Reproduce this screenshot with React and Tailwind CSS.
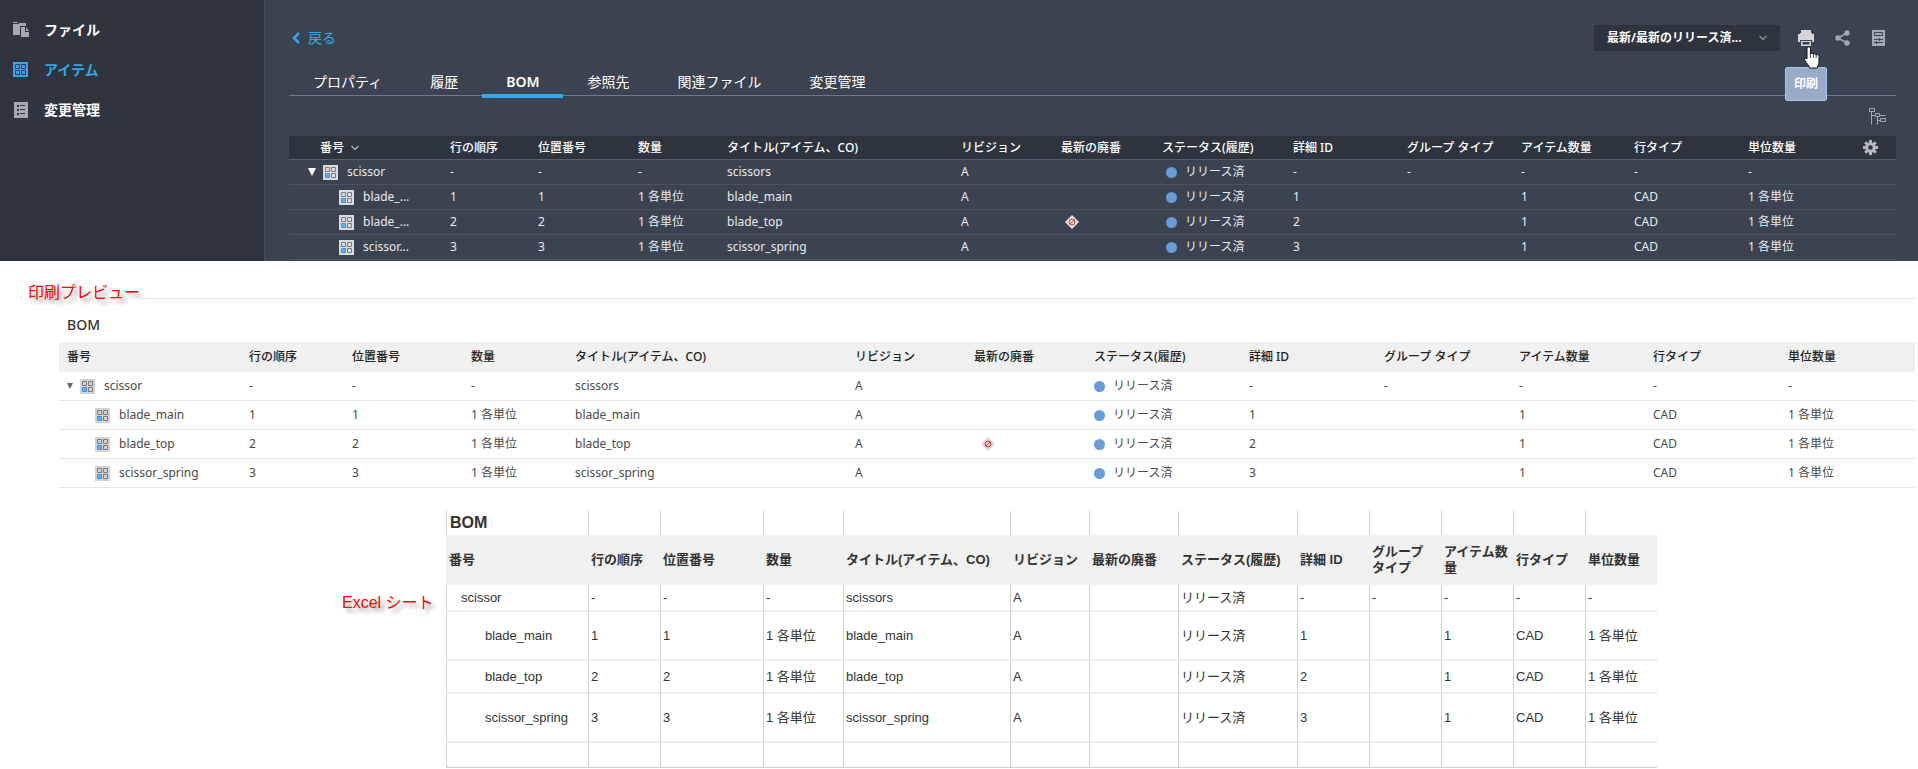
import { useState } from "react";

const NAV = [
  { id: "files", label: "ファイル" },
  { id: "items", label: "アイテム" },
  { id: "changes", label: "変更管理" },
];

const TABS = ["プロパティ", "履歴", "BOM", "参照先", "関連ファイル", "変更管理"];

const COLUMNS = [
  { key: "number", label: "番号", web: "w-[153px]", print: "w-[182px]", excel: "w-[142px]" },
  { key: "order", label: "行の順序", web: "w-[88px]", print: "w-[103px]", excel: "w-[72px]" },
  { key: "position", label: "位置番号", web: "w-[100px]", print: "w-[119px]", excel: "w-[103px]" },
  { key: "qty", label: "数量", web: "w-[89px]", print: "w-[104px]", excel: "w-[80px]" },
  { key: "title", label: "タイトル(アイテム、CO)", web: "w-[234px]", print: "w-[280px]", excel: "w-[167px]" },
  { key: "revision", label: "リビジョン", web: "w-[100px]", print: "w-[119px]", excel: "w-[79px]" },
  { key: "obsolete", label: "最新の廃番", web: "w-[101px]", print: "w-[120px]", excel: "w-[89px]" },
  { key: "status", label: "ステータス(履歴)", web: "w-[131px]", print: "w-[155px]", excel: "w-[119px]" },
  { key: "detail", label: "詳細 ID", web: "w-[114px]", print: "w-[135px]", excel: "w-[72px]" },
  { key: "group", label: "グループ タイプ", web: "w-[114px]", print: "w-[135px]", excel: "w-[72px]" },
  { key: "items", label: "アイテム数量", web: "w-[113px]", print: "w-[134px]", excel: "w-[72px]" },
  { key: "rowType", label: "行タイプ", web: "w-[114px]", print: "w-[135px]", excel: "w-[72px]" },
  { key: "unitQty", label: "単位数量", web: "w-[104px]", print: "w-[135px]", excel: "w-[72px]" },
];

const child = (n, name, extra = {}) => ({
  number: name, order: n, position: n, qty: "1 各単位", title: name, revision: "A",
  status: "リリース済", detail: n, group: "", items: "1", rowType: "CAD", unitQty: "1 各単位",
  ...extra,
});

const ROWS = [
  {
    root: true, number: "scissor", order: "-", position: "-", qty: "-", title: "scissors", revision: "A",
    status: "リリース済", detail: "-", group: "-", items: "-", rowType: "-", unitQty: "-", excelH: "h-[27px]",
  },
  child("1", "blade_main", { short: "blade_...", excelH: "h-[49px]" }),
  child("2", "blade_top", { short: "blade_...", obsolete: true, excelH: "h-[33px]" }),
  child("3", "scissor_spring", { short: "scissor...", excelH: "h-[49px]" }),
];

const NavIcon = ({ id }) => {
  if (id === "files")
    return (
      <svg width="17" height="16" viewBox="0 0 17 16" fill="#a4a8b2" aria-hidden="true">
        <path d="M0 0h5v1H0zM0 2h6V1h7v3H7v9H0z" />
        <path d="M8 5h4v5h4v5H8z" />
        <path d="M13 5l3 4h-3z" />
      </svg>
    );
  if (id === "items")
    return (
      <svg width="17" height="16" viewBox="0 0 17 16" aria-hidden="true">
        <path fill="#35a6ea" d="M0 0h15v15H0z" />
        <path fill="none" stroke="#2b3a4c" d="M2.5 2.5h4v4h-4zM8.5 2.5h4v4h-4zM2.5 8.5h4v4h-4zM8.5 8.5h4v4h-4z" />
      </svg>
    );
  return (
    <svg width="17" height="16" viewBox="0 0 17 16" aria-hidden="true">
      <path fill="#a4a8b2" d="M1 0h14v16H1z" />
      <path fill="#30343f" d="M4 3h2v2H4zM4 7h2v2H4zM4 11h2v2H4zM7 3h5v1H7zM7 7h5v1H7zM7 11h5v1H7z" />
    </svg>
  );
};

const ItemIcon = ({ bg }) => (
  <svg width="15" height="15" viewBox="0 0 15 15" className="shrink-0" aria-hidden="true">
    <path fill={bg} d="M0 0h15v15H0z" />
    <path fill="none" stroke="#777b82" d="M2.5 2.5h4v4h-4zM8.5 2.5h4v4h-4zM8.5 8.5h4v4h-4z" />
    <path fill="#5cb0f5" stroke="#4692d8" d="M2.5 8.5h4v4h-4z" />
  </svg>
);

const Triangle = ({ className }) => (
  <svg viewBox="0 0 8 8" className={className} fill="currentColor" aria-hidden="true">
    <path d="M0 0h8L4 8z" />
  </svg>
);

const ObsoleteIcon = ({ fill }) => (
  <svg width="14" height="14" viewBox="0 0 14 14" role="img" aria-label="廃番">
    <path fill={fill} d="M7 0l7 7-7 7-7-7z" />
    <circle cx="7" cy="7" r="3" fill="none" stroke="#c8382f" />
    <path d="M5 9l4-4" stroke="#c8382f" />
  </svg>
);

const ChevronDown = ({ className }) => (
  <svg width="8" height="6" viewBox="0 0 8 6" className={className} aria-hidden="true">
    <path d="M0.5 1l3.5 3.5L7.5 1" fill="none" stroke="currentColor" strokeWidth="1.5" />
  </svg>
);

const PrintIcon = () => (
  <svg width="16" height="16" viewBox="0 0 16 16" fill="#d3d5d9" aria-hidden="true">
    <path d="M3 0h10v3H3zM0 4h2V3h12v1h2v8h-2v-2H2v2H0z" />
    <path d="M3 11h10v5H3zM4.500 12v2.500h7V12z" fillRule="evenodd" />
  </svg>
);

const ShareIcon = () => (
  <svg width="15" height="16" viewBox="0 0 15 16" fill="#a4a8b2" aria-hidden="true">
    <path d="M12 3L3 8l9 5" fill="none" stroke="#a4a8b2" strokeWidth="1.5" />
    <circle cx="12" cy="3" r="2.700" />
    <circle cx="3" cy="8" r="2.700" />
    <circle cx="12" cy="13" r="2.700" />
  </svg>
);

const SheetIcon = () => (
  <svg width="13" height="16" viewBox="0 0 13 16" aria-hidden="true">
    <path fill="#a4a8b2" d="M0 0h13v16H0z" />
    <path fill="none" stroke="#3c4350" d="M2.500 2.500h8v3h-8zM2 9.500h9M2 12.500h9M7.500 8v3M4.500 11v3" />
  </svg>
);

const TreeIcon = () => (
  <svg width="17" height="17" viewBox="0 0 17 17" fill="none" stroke="#a4a8b2" aria-hidden="true">
    <path d="M0.500 0.500h5v3h-5zM2.500 3.500v13M2.500 7.500h4M6.500 5.500h4v3h-4zM10.500 7.500h6M8.500 8.500v8M8.500 12.500h3M11.500 10.500h5v3h-5z" />
  </svg>
);

const GearIcon = () => (
  <svg width="15" height="15" viewBox="0 0 15 15" aria-hidden="true">
    <circle cx="7.500" cy="7.500" r="3.800" fill="none" stroke="#b4b8c0" strokeWidth="3" />
    <path
      d="M7.500 0v3M7.500 12v3M0 7.500h3M12 7.500h3M2.200 2.200l2 2M10.800 10.800l2 2M12.800 2.200l-2 2M4.200 10.800l-2 2"
      stroke="#b4b8c0" strokeWidth="3"
    />
  </svg>
);

const HandCursor = () => (
  <svg width="18" height="24" viewBox="0 0 18 24" aria-hidden="true">
    <path
      d="M4 2.500a1.700 1.700 0 0 1 3.400 0V8c.3-1.200 2.700-1.200 3 .4.5-1 2.500-.8 2.800.6.8-.9 2.800-.5 2.800 1.200V16c0 2-1.500 3.500-1.500 6H6.500c-.3-2.500-3.300-5-5-8-.8-1.600 1-2.600 2.500-1z"
      fill="#fff" stroke="#111" strokeWidth="1"
    />
    <path d="M7.400 8v4M10.400 8.500v3.500M13.200 9v3" stroke="#111" strokeWidth="0.800" />
  </svg>
);

const Status = ({ label, className }) => (
  <span className={`flex items-center gap-2 ${className}`}>
    <span className="size-[11px] shrink-0 rounded-full bg-[#699bd5]" />
    {label}
  </span>
);

const ItemsTable = () => (
  <table className="w-full table-fixed border-separate border-spacing-0 text-left text-xs text-[#e8eaee]">
    <thead>
      <tr className="bg-[#2d343e]">
        {COLUMNS.map((c) => (
          <th key={c.key} className={`${c.web} h-6 border-b border-[#555e6b] p-0 pl-2 leading-5 font-medium whitespace-nowrap text-white`}>
            {c.key === "number" ? (
              <button type="button" className="ml-[23px] flex items-center gap-[7px]">
                {c.label}
                <ChevronDown className="text-[#a4a8b2]" />
              </button>
            ) : c.label}
          </th>
        ))}
        <th className="h-6 w-[52px] border-b border-[#555e6b] p-0">
          <button type="button" aria-label="列の設定" className="ml-[19px] block">
            <GearIcon />
          </button>
        </th>
      </tr>
    </thead>
    <tbody>
      {ROWS.map((row) => (
        <tr key={row.number}>
          {COLUMNS.map((c) => (
            <td key={c.key} className="h-[25px] border-b border-[#4b535f] p-0 pl-2 leading-5 whitespace-nowrap">
              {c.key === "number" ? (
                <span className={`flex items-center ${row.root ? "pl-[11px]" : "pl-[42px]"}`}>
                  {row.root && <Triangle className="mr-[7px] size-2 text-white" />}
                  <ItemIcon bg="#dcdcdc" />
                  <span className="ml-[9px]" title={row.number}>{row.short || row.number}</span>
                </span>
              ) : c.key === "obsolete" ? (
                row.obsolete && <span className="flex pl-1"><ObsoleteIcon fill="#e4e4e4" /></span>
              ) : c.key === "status" ? (
                <Status label={row.status} className="pl-1" />
              ) : row[c.key]}
            </td>
          ))}
          <td className="border-b border-[#4b535f] p-0" />
        </tr>
      ))}
    </tbody>
  </table>
);

const PrintTable = () => (
  <table className="w-full table-fixed border-separate border-spacing-0 text-left text-xs text-[#4a4a4a]">
    <caption className="h-[34px] pl-2 text-left text-sm leading-[34px] font-medium text-[#333]">BOM</caption>
    <thead>
      <tr className="bg-[#f0f0f0]">
        {COLUMNS.map((c) => (
          <th key={c.key} className={`${c.print} h-[30px] p-0 pl-2 leading-5 font-medium whitespace-nowrap text-[#222]`}>
            {c.label}
          </th>
        ))}
      </tr>
    </thead>
    <tbody>
      {ROWS.map((row) => (
        <tr key={row.number}>
          {COLUMNS.map((c) => (
            <td key={c.key} className="h-[29px] border-b border-[#e6e6e6] p-0 pl-2 leading-5 whitespace-nowrap">
              {c.key === "number" ? (
                <span className={`flex items-center ${row.root ? "" : "pl-7"}`}>
                  {row.root && <Triangle className="mr-[7px] size-1.5 text-[#666]" />}
                  <ItemIcon bg="#d2d2d2" />
                  <span className="ml-[9px]">{row.number}</span>
                </span>
              ) : c.key === "obsolete" ? (
                row.obsolete && <span className="flex pl-[7px]"><ObsoleteIcon fill="#dadada" /></span>
              ) : c.key === "status" ? (
                <Status label={row.status} className="" />
              ) : row[c.key]}
            </td>
          ))}
        </tr>
      ))}
    </tbody>
  </table>
);

const ExcelTable = () => (
  <table className="w-full table-fixed border-separate border-spacing-0 text-left font-['Liberation_Sans','Noto_Sans_CJK_JP',sans-serif] text-[13px] text-[#333]">
    <thead>
      <tr>
        {COLUMNS.map((c, i) => (
          <td key={c.key} className={`${c.excel} h-6 border-l border-[#d0d0d0] p-0 pl-[3px] text-base leading-5 font-bold`}>
            {i === 0 && "BOM"}
          </td>
        ))}
      </tr>
      <tr className="bg-[#f0f0f0]">
        {COLUMNS.map((c) => (
          <th key={c.key} className={`h-[50px] border-l border-[#f0f0f0] p-0 pl-0.5 leading-4 font-bold ${c.key === "group" ? "break-keep" : ""}`}>
            {c.label}
          </th>
        ))}
      </tr>
    </thead>
    <tbody>
      {ROWS.map((row) => (
        <tr key={row.number}>
          {COLUMNS.map((c, i) => (
            <td key={c.key} className={`${row.excelH} border-b-2 border-l border-b-[#ececec] border-l-[#d0d0d0] p-0 leading-5 whitespace-nowrap ${i > 0 ? "pl-0.5" : row.root ? "pl-[14px]" : "pl-[38px]"}`}>
              {c.key === "obsolete" ? "" : row[c.key]}
            </td>
          ))}
        </tr>
      ))}
      <tr>
        {COLUMNS.map((c) => (
          <td key={c.key} className="h-[25px] border-b border-l border-[#d0d0d0] p-0" />
        ))}
      </tr>
    </tbody>
  </table>
);

const App = () => {
  const [nav, setNav] = useState("items");
  const [tab, setTab] = useState("BOM");

  return (
    <div className="bg-white font-['Noto_Sans','Noto_Sans_CJK_JP',sans-serif]">
      <div className="flex">
        <nav className="w-[265px] shrink-0 border-r border-[#474e5b] bg-[#30343f] pt-[10px]">
          {NAV.map((n) => (
            <a
              key={n.id} href={`#${n.id}`} onClick={() => setNav(n.id)}
              className={`flex h-10 items-center gap-[14px] pl-[13px] text-sm font-bold ${nav === n.id ? "text-[#35a6ea]" : "text-white"}`}
            >
              <NavIcon id={n.id} />
              {n.label}
            </a>
          ))}
        </nav>

        <main className="min-w-0 flex-1 bg-[#3c4350] pt-[25px] pr-[22px] pb-px pl-6">
          <div className="flex h-[26px] items-center">
            <a href="#items" className="flex items-center gap-2 pl-[3px] text-sm text-[#35a6ea]">
              <svg width="8" height="12" viewBox="0 0 8 12" aria-hidden="true">
                <path d="M7 1L2 6l5 5" fill="none" stroke="currentColor" strokeWidth="2.500" />
              </svg>
              戻る
            </a>
            <div className="ml-auto grid w-[186px] items-center bg-[#2d343e]">
              <select
                aria-label="リリース"
                className="col-start-1 row-start-1 h-[26px] w-full appearance-none pl-[13px] text-xs font-bold text-white"
              >
                <option>最新/最新のリリース済...</option>
              </select>
              <ChevronDown className="pointer-events-none col-start-1 row-start-1 mr-[13px] justify-self-end text-[#8a909c]" />
            </div>
            <div className="relative ml-[18px] flex">
              <button type="button" aria-label="印刷"><PrintIcon /></button>
              <div role="tooltip" className="absolute top-[37px] -left-[13px] flex h-[34px] w-[42px] items-center justify-center rounded-xs border border-[#a9c0ea] bg-[#9aabc8] text-xs font-bold text-white">
                印刷
              </div>
              <div className="absolute top-[16px] left-[5px]"><HandCursor /></div>
            </div>
            <button type="button" aria-label="共有" className="ml-[21px]"><ShareIcon /></button>
            <button type="button" aria-label="レポート" className="mr-[11px] ml-[22px]"><SheetIcon /></button>
          </div>

          <div className="mt-[17px] flex h-[28px] border-b border-[#6f7a92]">
            {TABS.map((t) => (
              <button
                key={t} type="button" onClick={() => setTab(t)}
                className={`h-[30px] border-b-4 px-6 pt-px text-sm text-white ${tab === t ? "border-[#35a6ea] font-semibold" : "border-transparent"}`}
              >
                {t}
              </button>
            ))}
          </div>

          <div className="flex h-10 items-center justify-end pr-[10px]">
            <button type="button" aria-label="ツリー表示"><TreeIcon /></button>
          </div>

          <ItemsTable />
        </main>
      </div>

      <section className="pt-[19px] pr-[3px]">
        <div className="flex h-6 items-center pl-7">
          <h2 className="text-base text-[#f00] [text-shadow:4px_4px_4px_#00000066]">印刷プレビュー</h2>
          <hr className="mt-3 flex-1 border-[#e6e6e6]" />
        </div>
        <div className="mt-1 pl-[59px]">
          <PrintTable />
        </div>
      </section>

      <section className="flex pt-[23px] pr-[261px]">
        <h2 className="w-[446px] shrink-0 pt-20 pl-[342px] font-['Liberation_Sans','Noto_Sans_CJK_JP',sans-serif] text-base text-[#f00] [text-shadow:4px_4px_4px_#00000066]">
          Excel シート
        </h2>
        <ExcelTable />
      </section>
    </div>
  );
};

export default App;
